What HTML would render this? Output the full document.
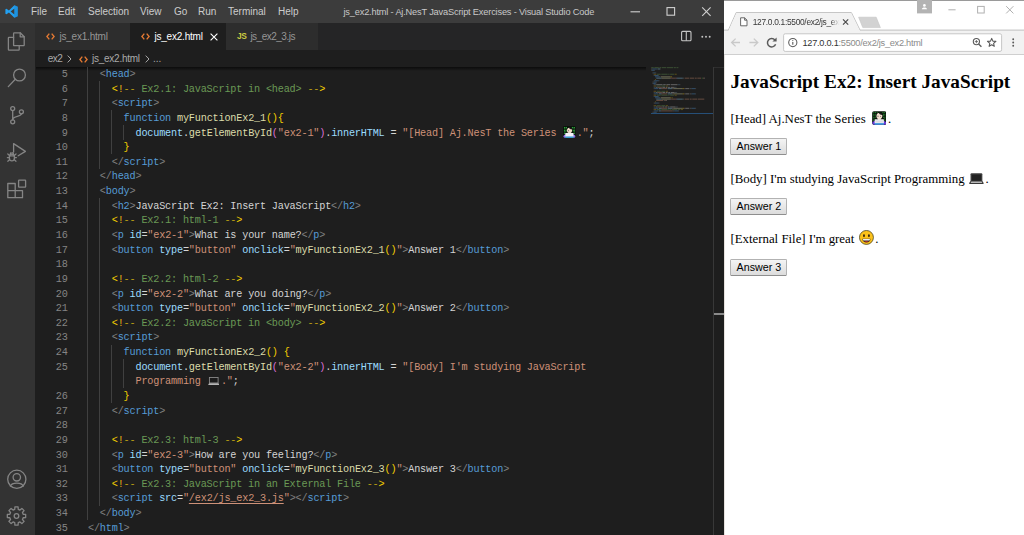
<!DOCTYPE html>
<html><head><meta charset="utf-8">
<style>
*{box-sizing:border-box;margin:0;padding:0}
html,body{width:1024px;height:535px;overflow:hidden;background:#1e1e1e}
body{font-family:"Liberation Sans",sans-serif;position:relative}
.abs{position:absolute}
/* ---------- VS Code ---------- */
#vs{position:absolute;left:0;top:0;width:724px;height:535px;background:#1e1e1e;overflow:hidden}
#title{position:absolute;left:0;top:0;width:724px;height:23px;background:#3c3c3c;color:#cccccc;font-size:10px}
#title .mi{position:absolute;top:6.3px;line-height:12px;white-space:nowrap}
#title .ttl{position:absolute;top:6.4px;left:343.5px;line-height:12px;white-space:nowrap;color:#c8c8c8;font-size:9.24px;letter-spacing:-0.18px}
#act{position:absolute;left:0;top:23px;width:35.3px;height:512px;background:#333333}
#tabs{position:absolute;left:35.3px;top:23px;width:688.7px;height:27px;background:#252526}
.tab{position:absolute;top:0;height:27px;background:#2d2d2d;color:#969696;font-size:10px;line-height:27px;white-space:nowrap}
.tab.on{background:#1e1e1e;color:#ffffff}
#bc{position:absolute;left:36px;top:50px;width:688px;height:17px;background:#1e1e1e;color:#a9a9a9;font-size:10px;line-height:17px;white-space:nowrap}
#ed{position:absolute;left:0;top:0;width:724px;height:535px;font-family:"Liberation Mono",monospace;font-size:10.2px;letter-spacing:-0.185px;color:#d4d4d4;pointer-events:none}
.row{position:absolute;left:0;width:724px;height:14.635px;line-height:14.635px;white-space:pre}
.ln{position:absolute;right:656.4px;top:0;color:#858585;text-align:right}
.code{position:absolute;top:0;white-space:pre}
.g{color:#808080}.t{color:#569cd6}.a{color:#9cdcfe}.s{color:#ce9178}.c{color:#6a9955}.w{color:#d4d4d4}
.f{color:#dcdcaa}.v{color:#9cdcfe}.y{color:#f5d000}.p{color:#da70d6}.k{color:#569cd6}
.o{color:#f0b414}.d{color:#b89c14}
.u{text-decoration:underline;text-underline-offset:2px}
.ig{position:absolute;width:1px;background:#404040}


/* ---------- Browser ---------- */
#br{font-family:"Liberation Sans",sans-serif}
#pg{position:absolute;left:0;top:55px;width:300px;height:480px;background:#fff;font-family:"Liberation Serif",serif;color:#000}
#pg h2{position:absolute;left:6.4px;white-space:nowrap;font-size:19.28px;font-weight:bold;line-height:22px}
#pg p{position:absolute;left:6.4px;white-space:nowrap;font-size:12.85px;line-height:15px}
#pg .b{position:absolute;left:6px;width:57px;height:17px;border:1px solid #b2b2b2;border-bottom-color:#8e8e8e;background:linear-gradient(#f4f4f4,#dcdcdc);border-radius:1.5px;font-family:"Liberation Sans",sans-serif;font-size:10.7px;line-height:15px;padding-left:0.8px;text-align:center;color:#000}

.em{display:inline-block;position:relative;width:17.8px;height:1px}
.em svg{position:absolute;left:1.7px}
.emo{display:inline-block;position:relative;width:14.25px;height:1px;letter-spacing:0}
.emo svg{position:absolute}
</style></head>
<body>
<svg width="0" height="0" style="position:absolute">
<defs>
<symbol id="emTech" viewBox="0 0 29 28">
  <rect x="0.3" y="0.3" width="28.4" height="27.4" rx="3.6" fill="#0a160b"/>
  <g fill="#2ea43a">
    <rect x="2.5" y="2.5" width="2" height="1.6"/><rect x="5.8" y="2.5" width="2.6" height="1.6"/><rect x="2.5" y="5.6" width="1.6" height="1.6"/><rect x="5.4" y="5.8" width="2" height="1.4"/>
    <rect x="2.5" y="8.8" width="2.4" height="1.5"/><rect x="6" y="9" width="1.6" height="1.5"/><rect x="2.5" y="12" width="1.6" height="1.5"/><rect x="5" y="12.2" width="2.4" height="1.4"/>
    <rect x="2.5" y="15.2" width="2.2" height="1.4"/><rect x="2.5" y="18.2" width="1.6" height="1.4"/>
    <rect x="20.6" y="2.5" width="2.4" height="1.6"/><rect x="24.2" y="2.5" width="2.2" height="1.6"/><rect x="22" y="5.6" width="1.8" height="1.6"/><rect x="24.8" y="5.8" width="1.8" height="1.4"/>
    <rect x="22" y="8.8" width="2.4" height="1.5"/><rect x="25.2" y="9" width="1.4" height="1.5"/><rect x="22.4" y="12" width="1.6" height="1.5"/><rect x="24.8" y="12.2" width="1.8" height="1.4"/>
    <rect x="24" y="15.2" width="2.4" height="1.4"/><rect x="25" y="18.2" width="1.6" height="1.4"/>
    <rect x="10" y="2" width="1.6" height="1.2"/>
  </g>
  <path d="M0.8 22.5 C2.5 20.6 4.5 20 6 20 H23 C24.5 20 26.5 20.6 28.2 22.5 V24.5 Q28.2 27.4 25 27.4 H4 Q0.8 27.4 0.8 24.5 Z" fill="#6a3ad6"/>
  <ellipse cx="15" cy="10" rx="6" ry="6.4" fill="#1b1b1b"/>
  <path d="M8.9 10.2 C8.9 5.6 12 3.6 14.2 4 C14 6.2 16 7.6 20.6 7.8 C21.2 12.8 18.8 16.4 14.8 16.4 C11.2 16.4 8.9 13.6 8.9 10.2 Z" fill="#f4dfd0"/>
  <ellipse cx="12" cy="10.4" rx="0.9" ry="1.4" fill="#4a3a34"/><ellipse cx="17.4" cy="10.6" rx="0.9" ry="1.1" fill="#6a5a54"/>
  <rect x="12" y="15.4" width="5.4" height="2.4" fill="#f0d4c2"/>
  <rect x="5.2" y="16.6" width="18.6" height="8" rx="0.8" fill="#ececf0"/>
  <rect x="7" y="19" width="15" height="4" fill="#dcdce2"/>
  <rect x="5.2" y="24.4" width="18.6" height="2.7" fill="#37b6e2"/>
</symbol>
<symbol id="emLap" viewBox="0 0 29 22">
  <path d="M3 2.6 Q3 0.6 5 0.6 H24 Q26 0.6 26 2.6 V16 H3 Z" fill="#3d3d3d"/>
  <rect x="5.6" y="3.2" width="17.8" height="11.6" fill="#222222"/>
  <path d="M3 15.6 H26 L28.6 19.6 Q28.8 21.6 27 21.6 H2 Q0.2 21.6 0.4 19.6 Z" fill="#3a3a3a"/>
  <path d="M4.6 16.6 H24.4 L26 19.4 H3 Z" fill="#b9b9b9"/>
</symbol>
<symbol id="emSmile" viewBox="0 0 29 29">
  <circle cx="14.5" cy="14.5" r="13.6" fill="#fcc21b" stroke="#45401f" stroke-width="1.5"/>
  <ellipse cx="9.7" cy="11.2" rx="1.9" ry="2.7" fill="#3b2a12"/><ellipse cx="19.3" cy="11.2" rx="1.9" ry="2.7" fill="#3b2a12"/>
  <path d="M6.6 17 H22.4 C22.4 21.8 18.8 24.4 14.5 24.4 C10.2 24.4 6.6 21.8 6.6 17 Z" fill="#3a2a20"/>
  <path d="M7.6 17.6 H21.4 C21.3 19 21 19.8 20.6 20.4 H8.4 C8 19.8 7.7 19 7.6 17.6 Z" fill="#ececec"/>
  <path d="M10.6 23 C12 21.4 17 21.4 18.4 23 C17 24.2 12 24.2 10.6 23 Z" fill="#e02a2a"/>
</symbol>
<symbol id="emLap2" viewBox="0 0 23 17">
  <rect x="2.8" y="0.9" width="17.4" height="11" fill="#1b1b1b" stroke="#8e8e8e" stroke-width="1.7"/>
  <path d="M2 12.4 H21 L23 16.6 H0 Z" fill="#b4b4b4"/>
</symbol>
<symbol id="emTech2" viewBox="0 0 29 28">
  <rect x="0.3" y="0.3" width="28.4" height="27.4" rx="2.5" fill="#050c05"/>
  <g fill="#37b845">
    <rect x="2" y="2.2" width="3" height="2"/><rect x="6" y="2.2" width="3" height="2"/><rect x="2" y="5.6" width="2.4" height="2"/><rect x="5.4" y="5.8" width="3" height="1.8"/>
    <rect x="2" y="9" width="3" height="2"/><rect x="6" y="9" width="2.4" height="2"/><rect x="2" y="12.4" width="2.4" height="2"/><rect x="5" y="12.4" width="3" height="2"/>
    <rect x="2" y="15.8" width="3" height="2"/>
    <rect x="20" y="2.2" width="3" height="2"/><rect x="24" y="2.2" width="3" height="2"/><rect x="21.4" y="5.6" width="2.4" height="2"/><rect x="24.6" y="5.8" width="2.4" height="1.8"/>
    <rect x="21.6" y="9" width="3" height="2"/><rect x="25.2" y="9" width="1.8" height="2"/><rect x="22" y="12.4" width="2.2" height="2"/><rect x="24.8" y="12.4" width="2.2" height="2"/>
    <rect x="24" y="15.8" width="3" height="2"/>
  </g>
  <path d="M0.8 22.5 C2.5 20 4.5 19.4 6 19.4 H23 C24.5 19.4 26.5 20 28.2 22.5 V24.5 Q28.2 27 25 27 H4 Q0.8 27 0.8 24.5 Z" fill="#9470e6"/>
  <ellipse cx="15.4" cy="9.6" rx="5.8" ry="6.2" fill="#1b1b1b"/>
  <path d="M8.9 10.2 C8.9 5.6 12 3.6 14.2 4 C14 6.2 16 7.6 20.6 7.8 C21.2 12.8 18.8 16.4 14.8 16.4 C11.2 16.4 8.9 13.6 8.9 10.2 Z" fill="#f0d8c8"/>
  <ellipse cx="12" cy="10.4" rx="0.9" ry="1.4" fill="#4a3a34"/>
  <rect x="5.2" y="16.2" width="18.6" height="8.4" rx="0.8" fill="#f2f2f6"/>
  <rect x="5.2" y="24" width="18.6" height="3" fill="#2fa8d2"/>
</symbol>
</defs></svg>
<div id="vs">
  <div id="title">
    <span class="mi" style="left:31px">File</span>
    <span class="mi" style="left:58px">Edit</span>
    <span class="mi" style="left:88px">Selection</span>
    <span class="mi" style="left:140px">View</span>
    <span class="mi" style="left:174px">Go</span>
    <span class="mi" style="left:198px">Run</span>
    <span class="mi" style="left:228px">Terminal</span>
    <span class="mi" style="left:278px">Help</span>
    
    <svg class="abs" style="left:5px;top:5px" width="13" height="13" viewBox="0 0 100 100">
      <path d="M72 2 L98 14 V86 L72 98 L30 58 L12 72 L3 67 V33 L12 28 L30 42 Z M72 27 L43 50 L72 73 Z" fill="#23a0f0"/>
      <path d="M72 2 L98 14 V86 L72 98 Z" fill="#1883d0" opacity="0.5"/>
    </svg>
    <svg class="abs" style="left:620px;top:0" width="104" height="23" viewBox="0 0 104 23" fill="none" stroke="#d0d0d0" stroke-width="1.1">
      <path d="M10.5 11.8 H20"/>
      <rect x="47" y="7.6" width="7.6" height="7.6"/>
      <path d="M82.2 7.4 L90.6 15.8 M90.6 7.4 L82.2 15.8"/>
    </svg>
    <span class="ttl">js_ex2.html - Aj.NesT JavaScript Exercises - Visual Studio Code</span>
  </div>
  <div id="act"></div>
<svg class="abs" style="left:0;top:0" width="36" height="535" viewBox="0 0 36 535" fill="none" stroke="#858585" stroke-width="1.3" stroke-linejoin="round" stroke-linecap="round">
<!-- files -->
<path d="M13.6 45.6 V33.4 a0.6 0.6 0 0 1 0.6 -0.6 H20.2 L24.2 36.8 V45 a0.6 0.6 0 0 1 -0.6 0.6 Z"/>
<path d="M20.2 32.8 V36.8 H24.2"/>
<path d="M13.6 37.3 H9 a0.6 0.6 0 0 0 -0.6 0.6 V49.6 a0.6 0.6 0 0 0 0.6 0.6 H18.6 a0.6 0.6 0 0 0 0.6 -0.6 V45.6"/>
<!-- search -->
<circle cx="19.5" cy="75" r="5.9"/>
<path d="M15.3 79.3 L8.3 86.6"/>
<!-- scm -->
<circle cx="12.7" cy="108.6" r="2"/><circle cx="12.7" cy="121.8" r="2"/><circle cx="21.4" cy="111.8" r="2"/>
<path d="M12.7 110.6 V119.8"/><path d="M21.4 113.8 C21.4 117.2 12.9 115.4 12.7 119.6"/>
<!-- debug -->
<path d="M13.6 152 V143.6 L25.4 151.4 L18.2 155.8"/>
<ellipse cx="11.9" cy="157.4" rx="2.6" ry="3.4"/>
<path d="M9.5 155.8 H14.3 M7.4 157.6 H9.3 M14.5 157.6 H16.4 M7.8 154 L9.5 155.4 M16 154 L14.3 155.4 M7.8 161.2 L9.5 159.8 M16 161.2 L14.3 159.8 M10.4 153.6 L11 152.6 M13.4 153.6 L12.8 152.6"/>
<!-- extensions -->
<path d="M7.8 183.5 H15.2 V190.6 H22.5 V197.7 H7.8 Z M7.8 190.6 H15.2 V197.7"/>
<rect x="18.6" y="180.2" width="7" height="7" rx="0.5"/>
<!-- account -->
<circle cx="16.8" cy="479.3" r="9.1"/>
<circle cx="16.8" cy="477.3" r="3.7"/>
<path d="M10.4 486.2 C11.6 482.2 22 482.2 23.2 486.2"/>
<!-- gear -->
<path d="M14.73 509.33 L14.93 506.83 L18.07 506.83 L18.27 509.33 L19.96 510.03 L21.87 508.41 L24.09 510.63 L22.47 512.54 L23.17 514.23 L25.67 514.43 L25.67 517.57 L23.17 517.77 L22.47 519.46 L24.09 521.37 L21.87 523.59 L19.96 521.97 L18.27 522.67 L18.07 525.17 L14.93 525.17 L14.73 522.67 L13.04 521.97 L11.13 523.59 L8.91 521.37 L10.53 519.46 L9.83 517.77 L7.33 517.57 L7.33 514.43 L9.83 514.23 L10.53 512.54 L8.91 510.63 L11.13 508.41 L13.04 510.03Z"/>
<circle cx="16.5" cy="516" r="2.3"/>
</svg>
  <div id="tabs">
    <div class="tab" style="left:0;width:94.7px;padding-left:0.7px"><svg class="abs" style="left:10.7px;top:10px" width="9" height="7" viewBox="0 0 9 7" fill="none" stroke="#e37933" stroke-width="1.35"><path d="M3.3 0.6 L0.9 3.5 L3.3 6.4 M5.7 0.6 L8.1 3.5 L5.7 6.4"/></svg><span style="position:absolute;left:24.1px;letter-spacing:-0.2px">js_ex1.html</span></div>
    <div class="tab on" style="left:94.7px;width:95.7px"><svg class="abs" style="left:11px;top:10px" width="9" height="7" viewBox="0 0 9 7" fill="none" stroke="#e37933" stroke-width="1.35"><path d="M3.3 0.6 L0.9 3.5 L3.3 6.4 M5.7 0.6 L8.1 3.5 L5.7 6.4"/></svg><span style="position:absolute;left:24.4px;letter-spacing:-0.2px">js_ex2.html</span>
      <svg class="abs" style="left:80px;top:10px" width="8" height="8" viewBox="0 0 8 8" stroke="#ffffff" stroke-width="1.1"><path d="M0.6 0.6 L7.4 7.4 M7.4 0.6 L0.6 7.4"/></svg></div>
    <div class="tab" style="left:190.4px;width:92px"><span style="position:absolute;left:11.3px;top:0;color:#cbcb41;font-size:8.4px;font-weight:bold;letter-spacing:-0.5px">JS</span><span style="position:absolute;left:24.7px;letter-spacing:-0.5px">js_ex2_3.js</span></div>
    <svg class="abs" style="left:644.7px;top:7px" width="34" height="13" viewBox="0 0 34 13" fill="none" stroke="#c5c5c5" stroke-width="1.1">
      <rect x="1.6" y="1.4" width="9.4" height="9.4" rx="1"/><path d="M6.3 1.4 V10.8"/>
      <g fill="#c5c5c5" stroke="none"><circle cx="22.3" cy="6.8" r="0.95"/><circle cx="26" cy="6.8" r="0.95"/><circle cx="29.7" cy="6.8" r="0.95"/></g>
    </svg>
  </div>
  <div id="bc"><span style="position:absolute;left:11.7px;letter-spacing:-0.5px">ex2</span>
    <svg class="abs" style="left:31px;top:5px" width="5" height="8" viewBox="0 0 5 8" fill="none" stroke="#a9a9a9" stroke-width="1"><path d="M0.7 0.6 L4 4 L0.7 7.4"/></svg>
    <svg class="abs" style="left:43px;top:5.5px" width="9" height="7" viewBox="0 0 9 7" fill="none" stroke="#e37933" stroke-width="1.35"><path d="M3.3 0.6 L0.9 3.5 L3.3 6.4 M5.7 0.6 L8.1 3.5 L5.7 6.4"/></svg>
    <span style="position:absolute;left:56px;letter-spacing:-0.25px">js_ex2.html</span>
    <svg class="abs" style="left:108.5px;top:5px" width="5" height="8" viewBox="0 0 5 8" fill="none" stroke="#a9a9a9" stroke-width="1"><path d="M0.7 0.6 L4 4 L0.7 7.4"/></svg>
    <span style="position:absolute;left:117px">...</span></div>
<svg class="abs" style="left:0;top:0" width="724" height="535" viewBox="0 0 724 535" opacity="0.6"><rect x="651.20" y="67.20" width="2.53" height="0.95" fill="#4f7342"/><rect x="654.36" y="67.20" width="4.42" height="0.95" fill="#4f7342"/><rect x="659.42" y="67.20" width="1.90" height="0.95" fill="#4f7342"/><rect x="661.94" y="67.20" width="4.42" height="0.95" fill="#4f7342"/><rect x="667.00" y="67.20" width="6.32" height="0.95" fill="#4f7342"/><rect x="673.95" y="67.20" width="1.90" height="0.95" fill="#4f7342"/><rect x="676.48" y="67.20" width="1.90" height="0.95" fill="#4f7342"/><rect x="651.20" y="68.51" width="1.26" height="0.95" fill="#6a6a6a"/><rect x="652.46" y="68.51" width="4.42" height="0.95" fill="#3f72a0"/><rect x="657.52" y="68.51" width="2.53" height="0.95" fill="#6f9fb8"/><rect x="660.05" y="68.51" width="0.63" height="0.95" fill="#6a6a6a"/><rect x="651.20" y="69.82" width="0.63" height="0.95" fill="#6a6a6a"/><rect x="651.83" y="69.82" width="2.53" height="0.95" fill="#3f72a0"/><rect x="654.36" y="69.82" width="0.63" height="0.95" fill="#6a6a6a"/><rect x="652.46" y="72.44" width="0.63" height="0.95" fill="#6a6a6a"/><rect x="653.10" y="72.44" width="2.53" height="0.95" fill="#3f72a0"/><rect x="655.62" y="72.44" width="0.63" height="0.95" fill="#6a6a6a"/><rect x="653.73" y="73.75" width="0.63" height="0.95" fill="#b89a10"/><rect x="654.36" y="73.75" width="0.63" height="0.95" fill="#a86a20"/><rect x="654.99" y="73.75" width="1.26" height="0.95" fill="#8a7615"/><rect x="656.89" y="73.75" width="3.79" height="0.95" fill="#4f7342"/><rect x="661.31" y="73.75" width="6.32" height="0.95" fill="#4f7342"/><rect x="668.26" y="73.75" width="1.26" height="0.95" fill="#4f7342"/><rect x="670.16" y="73.75" width="3.79" height="0.95" fill="#4f7342"/><rect x="674.58" y="73.75" width="1.26" height="0.95" fill="#8a7615"/><rect x="675.85" y="73.75" width="0.63" height="0.95" fill="#b89a10"/><rect x="653.73" y="75.06" width="0.63" height="0.95" fill="#6a6a6a"/><rect x="654.36" y="75.06" width="3.79" height="0.95" fill="#3f72a0"/><rect x="658.15" y="75.06" width="0.63" height="0.95" fill="#6a6a6a"/><rect x="654.99" y="76.37" width="5.06" height="0.95" fill="#3f72a0"/><rect x="660.68" y="76.37" width="9.48" height="0.95" fill="#a3a37e"/><rect x="670.16" y="76.37" width="1.90" height="0.95" fill="#b89a10"/><rect x="656.26" y="77.68" width="5.06" height="0.95" fill="#6f9fb8"/><rect x="661.31" y="77.68" width="0.63" height="0.95" fill="#9a9a9a"/><rect x="661.94" y="77.68" width="8.85" height="0.95" fill="#a3a37e"/><rect x="670.79" y="77.68" width="0.63" height="0.95" fill="#a0529e"/><rect x="671.42" y="77.68" width="4.42" height="0.95" fill="#9a6c56"/><rect x="675.85" y="77.68" width="0.63" height="0.95" fill="#a0529e"/><rect x="676.48" y="77.68" width="0.63" height="0.95" fill="#9a9a9a"/><rect x="677.11" y="77.68" width="5.69" height="0.95" fill="#6f9fb8"/><rect x="683.43" y="77.68" width="0.63" height="0.95" fill="#9a9a9a"/><rect x="684.70" y="77.68" width="4.42" height="0.95" fill="#9a6c56"/><rect x="689.75" y="77.68" width="4.42" height="0.95" fill="#9a6c56"/><rect x="694.81" y="77.68" width="1.90" height="0.95" fill="#9a6c56"/><rect x="697.34" y="77.68" width="3.79" height="0.95" fill="#9a6c56"/><rect x="701.76" y="77.68" width="1.26" height="0.95" fill="#3a7a3a"/><rect x="703.02" y="77.68" width="1.26" height="0.95" fill="#9a6c56"/><rect x="704.29" y="77.68" width="0.63" height="0.95" fill="#9a9a9a"/><rect x="654.99" y="78.99" width="0.63" height="0.95" fill="#b89a10"/><rect x="653.73" y="80.30" width="1.26" height="0.95" fill="#6a6a6a"/><rect x="654.99" y="80.30" width="3.79" height="0.95" fill="#3f72a0"/><rect x="658.78" y="80.30" width="0.63" height="0.95" fill="#6a6a6a"/><rect x="652.46" y="81.61" width="1.26" height="0.95" fill="#6a6a6a"/><rect x="653.73" y="81.61" width="2.53" height="0.95" fill="#3f72a0"/><rect x="656.26" y="81.61" width="0.63" height="0.95" fill="#6a6a6a"/><rect x="652.46" y="82.92" width="0.63" height="0.95" fill="#6a6a6a"/><rect x="653.10" y="82.92" width="2.53" height="0.95" fill="#3f72a0"/><rect x="655.62" y="82.92" width="0.63" height="0.95" fill="#6a6a6a"/><rect x="653.73" y="84.23" width="0.63" height="0.95" fill="#6a6a6a"/><rect x="654.36" y="84.23" width="1.26" height="0.95" fill="#3f72a0"/><rect x="655.62" y="84.23" width="0.63" height="0.95" fill="#6a6a6a"/><rect x="656.26" y="84.23" width="6.32" height="0.95" fill="#9a9a9a"/><rect x="663.21" y="84.23" width="2.53" height="0.95" fill="#9a9a9a"/><rect x="666.37" y="84.23" width="3.79" height="0.95" fill="#9a9a9a"/><rect x="670.79" y="84.23" width="6.32" height="0.95" fill="#9a9a9a"/><rect x="677.11" y="84.23" width="1.26" height="0.95" fill="#6a6a6a"/><rect x="678.38" y="84.23" width="1.26" height="0.95" fill="#3f72a0"/><rect x="679.64" y="84.23" width="0.63" height="0.95" fill="#6a6a6a"/><rect x="653.73" y="85.54" width="0.63" height="0.95" fill="#b89a10"/><rect x="654.36" y="85.54" width="0.63" height="0.95" fill="#a86a20"/><rect x="654.99" y="85.54" width="1.26" height="0.95" fill="#8a7615"/><rect x="656.89" y="85.54" width="3.79" height="0.95" fill="#4f7342"/><rect x="661.31" y="85.54" width="3.79" height="0.95" fill="#4f7342"/><rect x="665.74" y="85.54" width="1.26" height="0.95" fill="#8a7615"/><rect x="667.00" y="85.54" width="0.63" height="0.95" fill="#b89a10"/><rect x="653.73" y="86.85" width="0.63" height="0.95" fill="#6a6a6a"/><rect x="654.36" y="86.85" width="0.63" height="0.95" fill="#3f72a0"/><rect x="655.62" y="86.85" width="1.26" height="0.95" fill="#6f9fb8"/><rect x="656.89" y="86.85" width="0.63" height="0.95" fill="#9a9a9a"/><rect x="657.52" y="86.85" width="4.42" height="0.95" fill="#9a6c56"/><rect x="661.94" y="86.85" width="0.63" height="0.95" fill="#6a6a6a"/><rect x="662.58" y="86.85" width="2.53" height="0.95" fill="#9a9a9a"/><rect x="665.74" y="86.85" width="1.26" height="0.95" fill="#9a9a9a"/><rect x="667.63" y="86.85" width="2.53" height="0.95" fill="#9a9a9a"/><rect x="670.79" y="86.85" width="3.16" height="0.95" fill="#9a9a9a"/><rect x="673.95" y="86.85" width="1.26" height="0.95" fill="#6a6a6a"/><rect x="675.22" y="86.85" width="0.63" height="0.95" fill="#3f72a0"/><rect x="675.85" y="86.85" width="0.63" height="0.95" fill="#6a6a6a"/><rect x="653.73" y="88.16" width="0.63" height="0.95" fill="#6a6a6a"/><rect x="654.36" y="88.16" width="3.79" height="0.95" fill="#3f72a0"/><rect x="658.78" y="88.16" width="2.53" height="0.95" fill="#6f9fb8"/><rect x="661.31" y="88.16" width="0.63" height="0.95" fill="#9a9a9a"/><rect x="661.94" y="88.16" width="5.06" height="0.95" fill="#9a6c56"/><rect x="667.63" y="88.16" width="4.42" height="0.95" fill="#6f9fb8"/><rect x="672.06" y="88.16" width="0.63" height="0.95" fill="#9a9a9a"/><rect x="672.69" y="88.16" width="0.63" height="0.95" fill="#9a6c56"/><rect x="673.32" y="88.16" width="9.48" height="0.95" fill="#a3a37e"/><rect x="682.80" y="88.16" width="1.26" height="0.95" fill="#b89a10"/><rect x="684.06" y="88.16" width="0.63" height="0.95" fill="#9a6c56"/><rect x="684.70" y="88.16" width="0.63" height="0.95" fill="#6a6a6a"/><rect x="685.33" y="88.16" width="3.79" height="0.95" fill="#9a9a9a"/><rect x="689.75" y="88.16" width="0.63" height="0.95" fill="#9a9a9a"/><rect x="690.38" y="88.16" width="1.26" height="0.95" fill="#6a6a6a"/><rect x="691.65" y="88.16" width="3.79" height="0.95" fill="#3f72a0"/><rect x="695.44" y="88.16" width="0.63" height="0.95" fill="#6a6a6a"/><rect x="653.73" y="90.78" width="0.63" height="0.95" fill="#b89a10"/><rect x="654.36" y="90.78" width="0.63" height="0.95" fill="#a86a20"/><rect x="654.99" y="90.78" width="1.26" height="0.95" fill="#8a7615"/><rect x="656.89" y="90.78" width="3.79" height="0.95" fill="#4f7342"/><rect x="661.31" y="90.78" width="3.79" height="0.95" fill="#4f7342"/><rect x="665.74" y="90.78" width="1.26" height="0.95" fill="#8a7615"/><rect x="667.00" y="90.78" width="0.63" height="0.95" fill="#b89a10"/><rect x="653.73" y="92.09" width="0.63" height="0.95" fill="#6a6a6a"/><rect x="654.36" y="92.09" width="0.63" height="0.95" fill="#3f72a0"/><rect x="655.62" y="92.09" width="1.26" height="0.95" fill="#6f9fb8"/><rect x="656.89" y="92.09" width="0.63" height="0.95" fill="#9a9a9a"/><rect x="657.52" y="92.09" width="4.42" height="0.95" fill="#9a6c56"/><rect x="661.94" y="92.09" width="0.63" height="0.95" fill="#6a6a6a"/><rect x="662.58" y="92.09" width="2.53" height="0.95" fill="#9a9a9a"/><rect x="665.74" y="92.09" width="1.90" height="0.95" fill="#9a9a9a"/><rect x="668.26" y="92.09" width="1.90" height="0.95" fill="#9a9a9a"/><rect x="670.79" y="92.09" width="3.79" height="0.95" fill="#9a9a9a"/><rect x="674.58" y="92.09" width="1.26" height="0.95" fill="#6a6a6a"/><rect x="675.85" y="92.09" width="0.63" height="0.95" fill="#3f72a0"/><rect x="676.48" y="92.09" width="0.63" height="0.95" fill="#6a6a6a"/><rect x="653.73" y="93.40" width="0.63" height="0.95" fill="#6a6a6a"/><rect x="654.36" y="93.40" width="3.79" height="0.95" fill="#3f72a0"/><rect x="658.78" y="93.40" width="2.53" height="0.95" fill="#6f9fb8"/><rect x="661.31" y="93.40" width="0.63" height="0.95" fill="#9a9a9a"/><rect x="661.94" y="93.40" width="5.06" height="0.95" fill="#9a6c56"/><rect x="667.63" y="93.40" width="4.42" height="0.95" fill="#6f9fb8"/><rect x="672.06" y="93.40" width="0.63" height="0.95" fill="#9a9a9a"/><rect x="672.69" y="93.40" width="0.63" height="0.95" fill="#9a6c56"/><rect x="673.32" y="93.40" width="9.48" height="0.95" fill="#a3a37e"/><rect x="682.80" y="93.40" width="1.26" height="0.95" fill="#b89a10"/><rect x="684.06" y="93.40" width="0.63" height="0.95" fill="#9a6c56"/><rect x="684.70" y="93.40" width="0.63" height="0.95" fill="#6a6a6a"/><rect x="685.33" y="93.40" width="3.79" height="0.95" fill="#9a9a9a"/><rect x="689.75" y="93.40" width="0.63" height="0.95" fill="#9a9a9a"/><rect x="690.38" y="93.40" width="1.26" height="0.95" fill="#6a6a6a"/><rect x="691.65" y="93.40" width="3.79" height="0.95" fill="#3f72a0"/><rect x="695.44" y="93.40" width="0.63" height="0.95" fill="#6a6a6a"/><rect x="653.73" y="94.71" width="0.63" height="0.95" fill="#b89a10"/><rect x="654.36" y="94.71" width="0.63" height="0.95" fill="#a86a20"/><rect x="654.99" y="94.71" width="1.26" height="0.95" fill="#8a7615"/><rect x="656.89" y="94.71" width="3.79" height="0.95" fill="#4f7342"/><rect x="661.31" y="94.71" width="6.32" height="0.95" fill="#4f7342"/><rect x="668.26" y="94.71" width="1.26" height="0.95" fill="#4f7342"/><rect x="670.16" y="94.71" width="3.79" height="0.95" fill="#4f7342"/><rect x="674.58" y="94.71" width="1.26" height="0.95" fill="#8a7615"/><rect x="675.85" y="94.71" width="0.63" height="0.95" fill="#b89a10"/><rect x="653.73" y="96.02" width="0.63" height="0.95" fill="#6a6a6a"/><rect x="654.36" y="96.02" width="3.79" height="0.95" fill="#3f72a0"/><rect x="658.15" y="96.02" width="0.63" height="0.95" fill="#6a6a6a"/><rect x="654.99" y="97.33" width="5.06" height="0.95" fill="#3f72a0"/><rect x="660.68" y="97.33" width="9.48" height="0.95" fill="#a3a37e"/><rect x="670.16" y="97.33" width="1.26" height="0.95" fill="#b89a10"/><rect x="672.06" y="97.33" width="0.63" height="0.95" fill="#b89a10"/><rect x="656.26" y="98.64" width="5.06" height="0.95" fill="#6f9fb8"/><rect x="661.31" y="98.64" width="0.63" height="0.95" fill="#9a9a9a"/><rect x="661.94" y="98.64" width="8.85" height="0.95" fill="#a3a37e"/><rect x="670.79" y="98.64" width="0.63" height="0.95" fill="#a0529e"/><rect x="671.42" y="98.64" width="4.42" height="0.95" fill="#9a6c56"/><rect x="675.85" y="98.64" width="0.63" height="0.95" fill="#a0529e"/><rect x="676.48" y="98.64" width="0.63" height="0.95" fill="#9a9a9a"/><rect x="677.11" y="98.64" width="5.69" height="0.95" fill="#6f9fb8"/><rect x="683.43" y="98.64" width="0.63" height="0.95" fill="#9a9a9a"/><rect x="684.70" y="98.64" width="4.42" height="0.95" fill="#9a6c56"/><rect x="689.75" y="98.64" width="1.90" height="0.95" fill="#9a6c56"/><rect x="692.28" y="98.64" width="5.06" height="0.95" fill="#9a6c56"/><rect x="697.97" y="98.64" width="6.32" height="0.95" fill="#9a6c56"/><rect x="656.26" y="99.95" width="6.95" height="0.95" fill="#9a6c56"/><rect x="663.84" y="99.95" width="1.26" height="0.95" fill="#666"/><rect x="665.10" y="99.95" width="1.26" height="0.95" fill="#9a6c56"/><rect x="666.37" y="99.95" width="0.63" height="0.95" fill="#9a9a9a"/><rect x="654.99" y="101.26" width="0.63" height="0.95" fill="#b89a10"/><rect x="653.73" y="102.57" width="1.26" height="0.95" fill="#6a6a6a"/><rect x="654.99" y="102.57" width="3.79" height="0.95" fill="#3f72a0"/><rect x="658.78" y="102.57" width="0.63" height="0.95" fill="#6a6a6a"/><rect x="653.73" y="105.19" width="0.63" height="0.95" fill="#b89a10"/><rect x="654.36" y="105.19" width="0.63" height="0.95" fill="#a86a20"/><rect x="654.99" y="105.19" width="1.26" height="0.95" fill="#8a7615"/><rect x="656.89" y="105.19" width="3.79" height="0.95" fill="#4f7342"/><rect x="661.31" y="105.19" width="3.79" height="0.95" fill="#4f7342"/><rect x="665.74" y="105.19" width="1.26" height="0.95" fill="#8a7615"/><rect x="667.00" y="105.19" width="0.63" height="0.95" fill="#b89a10"/><rect x="653.73" y="106.50" width="0.63" height="0.95" fill="#6a6a6a"/><rect x="654.36" y="106.50" width="0.63" height="0.95" fill="#3f72a0"/><rect x="655.62" y="106.50" width="1.26" height="0.95" fill="#6f9fb8"/><rect x="656.89" y="106.50" width="0.63" height="0.95" fill="#9a9a9a"/><rect x="657.52" y="106.50" width="4.42" height="0.95" fill="#9a6c56"/><rect x="661.94" y="106.50" width="0.63" height="0.95" fill="#6a6a6a"/><rect x="662.58" y="106.50" width="1.90" height="0.95" fill="#9a9a9a"/><rect x="665.10" y="106.50" width="1.90" height="0.95" fill="#9a9a9a"/><rect x="667.63" y="106.50" width="1.90" height="0.95" fill="#9a9a9a"/><rect x="670.16" y="106.50" width="5.06" height="0.95" fill="#9a9a9a"/><rect x="675.22" y="106.50" width="1.26" height="0.95" fill="#6a6a6a"/><rect x="676.48" y="106.50" width="0.63" height="0.95" fill="#3f72a0"/><rect x="677.11" y="106.50" width="0.63" height="0.95" fill="#6a6a6a"/><rect x="653.73" y="107.81" width="0.63" height="0.95" fill="#6a6a6a"/><rect x="654.36" y="107.81" width="3.79" height="0.95" fill="#3f72a0"/><rect x="658.78" y="107.81" width="2.53" height="0.95" fill="#6f9fb8"/><rect x="661.31" y="107.81" width="0.63" height="0.95" fill="#9a9a9a"/><rect x="661.94" y="107.81" width="5.06" height="0.95" fill="#9a6c56"/><rect x="667.63" y="107.81" width="4.42" height="0.95" fill="#6f9fb8"/><rect x="672.06" y="107.81" width="0.63" height="0.95" fill="#9a9a9a"/><rect x="672.69" y="107.81" width="0.63" height="0.95" fill="#9a6c56"/><rect x="673.32" y="107.81" width="9.48" height="0.95" fill="#a3a37e"/><rect x="682.80" y="107.81" width="1.26" height="0.95" fill="#b89a10"/><rect x="684.06" y="107.81" width="0.63" height="0.95" fill="#9a6c56"/><rect x="684.70" y="107.81" width="0.63" height="0.95" fill="#6a6a6a"/><rect x="685.33" y="107.81" width="3.79" height="0.95" fill="#9a9a9a"/><rect x="689.75" y="107.81" width="0.63" height="0.95" fill="#9a9a9a"/><rect x="690.38" y="107.81" width="1.26" height="0.95" fill="#6a6a6a"/><rect x="691.65" y="107.81" width="3.79" height="0.95" fill="#3f72a0"/><rect x="695.44" y="107.81" width="0.63" height="0.95" fill="#6a6a6a"/><rect x="653.73" y="109.12" width="0.63" height="0.95" fill="#b89a10"/><rect x="654.36" y="109.12" width="0.63" height="0.95" fill="#a86a20"/><rect x="654.99" y="109.12" width="1.26" height="0.95" fill="#8a7615"/><rect x="656.89" y="109.12" width="3.79" height="0.95" fill="#4f7342"/><rect x="661.31" y="109.12" width="6.32" height="0.95" fill="#4f7342"/><rect x="668.26" y="109.12" width="1.26" height="0.95" fill="#4f7342"/><rect x="670.16" y="109.12" width="1.26" height="0.95" fill="#4f7342"/><rect x="672.06" y="109.12" width="5.06" height="0.95" fill="#4f7342"/><rect x="677.74" y="109.12" width="2.53" height="0.95" fill="#4f7342"/><rect x="680.90" y="109.12" width="1.26" height="0.95" fill="#8a7615"/><rect x="682.17" y="109.12" width="0.63" height="0.95" fill="#b89a10"/><rect x="653.73" y="110.43" width="0.63" height="0.95" fill="#6a6a6a"/><rect x="654.36" y="110.43" width="3.79" height="0.95" fill="#3f72a0"/><rect x="658.78" y="110.43" width="1.90" height="0.95" fill="#6f9fb8"/><rect x="660.68" y="110.43" width="0.63" height="0.95" fill="#9a9a9a"/><rect x="661.31" y="110.43" width="0.63" height="0.95" fill="#9a6c56"/><rect x="661.94" y="110.43" width="10.11" height="0.95" fill="#9a6c56"/><rect x="672.06" y="110.43" width="0.63" height="0.95" fill="#9a6c56"/><rect x="672.69" y="110.43" width="1.90" height="0.95" fill="#6a6a6a"/><rect x="674.58" y="110.43" width="3.79" height="0.95" fill="#3f72a0"/><rect x="678.38" y="110.43" width="0.63" height="0.95" fill="#6a6a6a"/><rect x="652.46" y="111.74" width="1.26" height="0.95" fill="#6a6a6a"/><rect x="653.73" y="111.74" width="2.53" height="0.95" fill="#3f72a0"/><rect x="656.26" y="111.74" width="0.63" height="0.95" fill="#6a6a6a"/><rect x="651.20" y="113.05" width="1.26" height="0.95" fill="#6a6a6a"/><rect x="652.46" y="113.05" width="2.53" height="0.95" fill="#3f72a0"/><rect x="654.99" y="113.05" width="0.63" height="0.95" fill="#6a6a6a"/></svg>
  <!-- scroll shadow -->
  <div class="abs" style="left:36px;top:66.6px;width:610px;height:4px;background:linear-gradient(#000000a0,#00000000)"></div>
  <div class="abs" style="left:713px;top:66.5px;width:11px;height:1px;background:#2e2e2e"></div>
  <!-- minimap current line / slider bottom -->
  <div class="abs" style="left:651px;top:113px;width:62px;height:1px;background:#264f78"></div>
  <!-- scrollbar border & marks -->
  <div class="abs" style="left:713px;top:67px;width:1px;height:468px;background:#383838"></div>
  <div class="abs" style="left:714px;top:313.2px;width:10px;height:1.6px;background:#8a8a8a"></div>
  <div id="ed">
<div class="ig" style="left:87.00px;top:66.50px;height:453.69px"></div>
<div class="ig" style="left:99.00px;top:81.14px;height:87.81px"></div>
<div class="ig" style="left:111.00px;top:110.41px;height:43.91px"></div>
<div class="ig" style="left:123.00px;top:125.04px;height:14.63px"></div>
<div class="ig" style="left:99.00px;top:198.22px;height:307.33px"></div>
<div class="ig" style="left:111.00px;top:344.56px;height:58.54px"></div>
<div class="ig" style="left:123.00px;top:359.20px;height:29.27px"></div>
<div class="row" style="top:68.00px"><span class="ln">5</span><span class="code" style="left:99.87px"><span class="g">&lt;</span><span class="t">head</span><span class="g">&gt;</span></span></div>
<div class="row" style="top:82.64px"><span class="ln">6</span><span class="code" style="left:111.74px"><span class="y">&lt;</span><span class="o">!</span><span class="d">--</span><span class="c"> Ex2.1: JavaScript in &lt;head&gt; </span><span class="d">--</span><span class="y">&gt;</span></span></div>
<div class="row" style="top:97.27px"><span class="ln">7</span><span class="code" style="left:111.74px"><span class="g">&lt;</span><span class="t">script</span><span class="g">&gt;</span></span></div>
<div class="row" style="top:111.91px"><span class="ln">8</span><span class="code" style="left:123.61px"><span class="k">function</span><span class="w"> </span><span class="f">myFunctionEx2_1</span><span class="y">(){</span></span></div>
<div class="row" style="top:126.54px"><span class="ln">9</span><span class="code" style="left:135.48px"><span class="v">document</span><span class="w">.</span><span class="f">getElementById</span><span class="p">(</span><span class="s">"ex2-1"</span><span class="p">)</span><span class="w">.</span><span class="v">innerHTML</span><span class="w"> = </span><span class="s">"[Head] Aj.NesT the Series </span><span class="emo"><svg width="12.8" height="12.3" style="left:1.0px;top:-8.9px"><use href="#emTech2"/></svg></span><span class="s">."</span><span class="w">;</span></span></div>
<div class="row" style="top:141.18px"><span class="ln">10</span><span class="code" style="left:123.61px"><span class="y">}</span></span></div>
<div class="row" style="top:155.81px"><span class="ln">11</span><span class="code" style="left:111.74px"><span class="g">&lt;/</span><span class="t">script</span><span class="g">&gt;</span></span></div>
<div class="row" style="top:170.44px"><span class="ln">12</span><span class="code" style="left:99.87px"><span class="g">&lt;/</span><span class="t">head</span><span class="g">&gt;</span></span></div>
<div class="row" style="top:185.08px"><span class="ln">13</span><span class="code" style="left:99.87px"><span class="g">&lt;</span><span class="t">body</span><span class="g">&gt;</span></span></div>
<div class="row" style="top:199.72px"><span class="ln">14</span><span class="code" style="left:111.74px"><span class="g">&lt;</span><span class="t">h2</span><span class="g">&gt;</span><span class="w">JavaScript Ex2: Insert JavaScript</span><span class="g">&lt;/</span><span class="t">h2</span><span class="g">&gt;</span></span></div>
<div class="row" style="top:214.35px"><span class="ln">15</span><span class="code" style="left:111.74px"><span class="y">&lt;</span><span class="o">!</span><span class="d">--</span><span class="c"> Ex2.1: html-1 </span><span class="d">--</span><span class="y">&gt;</span></span></div>
<div class="row" style="top:228.98px"><span class="ln">16</span><span class="code" style="left:111.74px"><span class="g">&lt;</span><span class="t">p</span><span class="w"> </span><span class="a">id</span><span class="w">=</span><span class="s">"ex2-1"</span><span class="g">&gt;</span><span class="w">What is your name?</span><span class="g">&lt;/</span><span class="t">p</span><span class="g">&gt;</span></span></div>
<div class="row" style="top:243.62px"><span class="ln">17</span><span class="code" style="left:111.74px"><span class="g">&lt;</span><span class="t">button</span><span class="w"> </span><span class="a">type</span><span class="w">=</span><span class="s">"button"</span><span class="w"> </span><span class="a">onclick</span><span class="w">=</span><span class="s">"</span><span class="f">myFunctionEx2_1</span><span class="y">()</span><span class="s">"</span><span class="g">&gt;</span><span class="w">Answer 1</span><span class="g">&lt;/</span><span class="t">button</span><span class="g">&gt;</span></span></div>
<div class="row" style="top:258.25px"><span class="ln">18</span><span class="code" style="left:88.00px"></span></div>
<div class="row" style="top:272.89px"><span class="ln">19</span><span class="code" style="left:111.74px"><span class="y">&lt;</span><span class="o">!</span><span class="d">--</span><span class="c"> Ex2.2: html-2 </span><span class="d">--</span><span class="y">&gt;</span></span></div>
<div class="row" style="top:287.52px"><span class="ln">20</span><span class="code" style="left:111.74px"><span class="g">&lt;</span><span class="t">p</span><span class="w"> </span><span class="a">id</span><span class="w">=</span><span class="s">"ex2-2"</span><span class="g">&gt;</span><span class="w">What are you doing?</span><span class="g">&lt;/</span><span class="t">p</span><span class="g">&gt;</span></span></div>
<div class="row" style="top:302.16px"><span class="ln">21</span><span class="code" style="left:111.74px"><span class="g">&lt;</span><span class="t">button</span><span class="w"> </span><span class="a">type</span><span class="w">=</span><span class="s">"button"</span><span class="w"> </span><span class="a">onclick</span><span class="w">=</span><span class="s">"</span><span class="f">myFunctionEx2_2</span><span class="y">()</span><span class="s">"</span><span class="g">&gt;</span><span class="w">Answer 2</span><span class="g">&lt;/</span><span class="t">button</span><span class="g">&gt;</span></span></div>
<div class="row" style="top:316.79px"><span class="ln">22</span><span class="code" style="left:111.74px"><span class="y">&lt;</span><span class="o">!</span><span class="d">--</span><span class="c"> Ex2.2: JavaScript in &lt;body&gt; </span><span class="d">--</span><span class="y">&gt;</span></span></div>
<div class="row" style="top:331.43px"><span class="ln">23</span><span class="code" style="left:111.74px"><span class="g">&lt;</span><span class="t">script</span><span class="g">&gt;</span></span></div>
<div class="row" style="top:346.06px"><span class="ln">24</span><span class="code" style="left:123.61px"><span class="k">function</span><span class="w"> </span><span class="f">myFunctionEx2_2</span><span class="y">()</span><span class="w"> </span><span class="y">{</span></span></div>
<div class="row" style="top:360.70px"><span class="ln">25</span><span class="code" style="left:135.48px"><span class="v">document</span><span class="w">.</span><span class="f">getElementById</span><span class="p">(</span><span class="s">"ex2-2"</span><span class="p">)</span><span class="w">.</span><span class="v">innerHTML</span><span class="w"> = </span><span class="s">"[Body] I'm studying JavaScript</span></span></div>
<div class="row" style="top:375.33px"><span class="code" style="left:135.48px"><span class="s">Programming </span><span class="emo"><svg width="11.5" height="8.5" style="left:1.1px;top:-6.4px"><use href="#emLap2"/></svg></span><span class="s">."</span><span class="w">;</span></span></div>
<div class="row" style="top:389.97px"><span class="ln">26</span><span class="code" style="left:123.61px"><span class="y">}</span></span></div>
<div class="row" style="top:404.61px"><span class="ln">27</span><span class="code" style="left:111.74px"><span class="g">&lt;/</span><span class="t">script</span><span class="g">&gt;</span></span></div>
<div class="row" style="top:419.24px"><span class="ln">28</span><span class="code" style="left:88.00px"></span></div>
<div class="row" style="top:433.88px"><span class="ln">29</span><span class="code" style="left:111.74px"><span class="y">&lt;</span><span class="o">!</span><span class="d">--</span><span class="c"> Ex2.3: html-3 </span><span class="d">--</span><span class="y">&gt;</span></span></div>
<div class="row" style="top:448.51px"><span class="ln">30</span><span class="code" style="left:111.74px"><span class="g">&lt;</span><span class="t">p</span><span class="w"> </span><span class="a">id</span><span class="w">=</span><span class="s">"ex2-3"</span><span class="g">&gt;</span><span class="w">How are you feeling?</span><span class="g">&lt;/</span><span class="t">p</span><span class="g">&gt;</span></span></div>
<div class="row" style="top:463.14px"><span class="ln">31</span><span class="code" style="left:111.74px"><span class="g">&lt;</span><span class="t">button</span><span class="w"> </span><span class="a">type</span><span class="w">=</span><span class="s">"button"</span><span class="w"> </span><span class="a">onclick</span><span class="w">=</span><span class="s">"</span><span class="f">myFunctionEx2_3</span><span class="y">()</span><span class="s">"</span><span class="g">&gt;</span><span class="w">Answer 3</span><span class="g">&lt;/</span><span class="t">button</span><span class="g">&gt;</span></span></div>
<div class="row" style="top:477.78px"><span class="ln">32</span><span class="code" style="left:111.74px"><span class="y">&lt;</span><span class="o">!</span><span class="d">--</span><span class="c"> Ex2.3: JavaScript in an External File </span><span class="d">--</span><span class="y">&gt;</span></span></div>
<div class="row" style="top:492.42px"><span class="ln">33</span><span class="code" style="left:111.74px"><span class="g">&lt;</span><span class="t">script</span><span class="w"> </span><span class="a">src</span><span class="w">=</span><span class="s">"</span><span class="s u">/ex2/js_ex2_3.js</span><span class="s">"</span><span class="g">&gt;&lt;/</span><span class="t">script</span><span class="g">&gt;</span></span></div>
<div class="row" style="top:507.05px"><span class="ln">34</span><span class="code" style="left:99.87px"><span class="g">&lt;/</span><span class="t">body</span><span class="g">&gt;</span></span></div>
<div class="row" style="top:521.68px"><span class="ln">35</span><span class="code" style="left:88.00px"><span class="g">&lt;/</span><span class="t">html</span><span class="g">&gt;</span></span></div>
  </div>
</div>
<!-- ---------- Browser ---------- -->
<div id="br" style="position:absolute;left:724px;top:0;width:300px;height:535px;background:#ffffff;overflow:hidden">
  <div class="abs" style="left:0;top:0;width:300px;height:1px;background:#9a9a9a"></div>
  <!-- toolbar -->
  <div class="abs" style="left:0;top:30px;width:300px;height:24.6px;background:#f2f2f2;border-bottom:1px solid #cfcfcf"></div>
  <!-- tab shape -->
  <svg class="abs" style="left:0;top:0" width="300" height="56" viewBox="0 0 300 56">
    <rect x="193" y="0" width="15" height="13.4" fill="#b3b3b3"/>
    <circle cx="200.4" cy="5.4" r="1.35" fill="#fff"/><path d="M197.8 9.2 C197.8 6.9 203 6.9 203 9.2 Z" fill="#fff"/>
    <path d="M224.4 9.8 H231.6" stroke="#b0b0b0" stroke-width="1"/>
    <rect x="253.6" y="6.4" width="6.6" height="6.6" fill="none" stroke="#b0b0b0" stroke-width="1"/>
    <path d="M282.2 6.2 L289.4 13.4 M289.4 6.2 L282.2 13.4" stroke="#b0b0b0" stroke-width="1"/>
    <path d="M134.6 17.2 H152.2 L156.4 27.6 H138.8 Z" fill="#d2d2d2" stroke="#c4c4c4" stroke-width="0.6"/>
    <path d="M0 30.1 H4.4 L12.2 12.6 H127.4 L136 30.1 H300" fill="none" stroke="#b9b9b9" stroke-width="0.9"/>
    <path d="M4.6 30.6 L12.5 13 H127.1 L135.7 30.6 Z" fill="#f2f2f2"/>
    <!-- favicon page -->
    <path d="M16.6 17.8 H20.6 L23 20.2 V25.8 H16.6 Z M20.6 17.8 V20.2 H23" fill="#fff" stroke="#5a5a5a" stroke-width="0.9"/>
    <!-- tab close -->
    <path d="M119 19.4 L124.2 24.6 M124.2 19.4 L119 24.6" stroke="#4a4a4a" stroke-width="1.2"/>
    <!-- nav -->
    <g fill="none" stroke="#c9c9c9" stroke-width="1.3"><path d="M16 42.5 H7.8 M11.6 38.6 L7.6 42.5 L11.6 46.4"/><path d="M25.4 42.5 H33.6 M29.8 38.6 L33.8 42.5 L29.8 46.4"/></g>
    <path d="M50.9 40 A4.2 4.2 0 1 0 51.6 44.2" fill="none" stroke="#5a5a5a" stroke-width="1.5"/><path d="M52.6 37.4 V41.6 H48.4 Z" fill="#5a5a5a"/>
    <!-- omnibox -->
    <rect x="59.6" y="33.8" width="218" height="17.6" rx="1.6" fill="#fff" stroke="#c2c2c2" stroke-width="0.9"/>
    <circle cx="68.8" cy="42.6" r="4.1" fill="none" stroke="#5a5a5a" stroke-width="1.05"/><path d="M68.8 42 V44.8" stroke="#5a5a5a" stroke-width="1.1"/><circle cx="68.8" cy="40.6" r="0.6" fill="#5a5a5a"/>
    <circle cx="252.4" cy="41.6" r="3.1" fill="none" stroke="#5a5a5a" stroke-width="1.1"/><path d="M254.6 44 L257.4 46.8" stroke="#5a5a5a" stroke-width="1.3"/><path d="M250.8 41.6 H254 M252.4 40 V43.2" stroke="#5a5a5a" stroke-width="0.8"/>
    <path d="M267.7 38.4 L268.9 41.1 L271.9 41.4 L269.6 43.4 L270.3 46.3 L267.7 44.7 L265.1 46.3 L265.8 43.4 L263.5 41.4 L266.5 41.1 Z" fill="none" stroke="#5a5a5a" stroke-width="1.1" stroke-linejoin="round"/>
    <g fill="#5a5a5a"><circle cx="289.2" cy="39.2" r="0.95"/><circle cx="289.2" cy="42.5" r="0.95"/><circle cx="289.2" cy="45.8" r="0.95"/></g>
  </svg>
  <div class="abs" style="left:28.7px;top:16px;width:86px;height:12px;overflow:hidden;font-size:8.4px;line-height:12px;color:#383838;white-space:nowrap;letter-spacing:-0.3px;-webkit-mask-image:linear-gradient(90deg,#000 78px,transparent 86px)">127.0.0.1:5500/ex2/js_ex2.html</div>
  <div class="abs" style="left:78.5px;top:35.5px;height:14px;font-size:9.2px;line-height:14px;color:#8a8a8a;white-space:nowrap;letter-spacing:-0.26px"><span style="color:#333">127.0.0.1</span>:5500/ex2/js_ex2.html</div>
  <div id="pg">
    <div class="abs" style="left:0;top:0;width:1px;height:480px;background:#e6e2de"></div>
    <h2 style="top:15.8px">JavaScript Ex2: Insert JavaScript</h2>
    <p style="top:56.7px">[Head] Aj.NesT the Series <span class="em" style="width:19px"><svg width="14.5" height="14.1" style="top:-11px;left:2.8px"><use href="#emTech"/></svg></span>.</p>
    <div class="b" style="top:83px">Answer 1</div>
    <p style="top:116.9px">[Body] I'm studying JavaScript Programming <span class="em"><svg width="14.9" height="11.3" style="top:-9.1px;left:1.6px"><use href="#emLap"/></svg></span>.</p>
    <div class="b" style="top:143.3px">Answer 2</div>
    <p style="top:177.1px">[External File] I'm great <span class="em"><svg width="14.9" height="14.9" style="top:-11.7px;left:1.6px"><use href="#emSmile"/></svg></span>.</p>
    <div class="b" style="top:203.6px">Answer 3</div>
  </div>
</div>
</body></html>
